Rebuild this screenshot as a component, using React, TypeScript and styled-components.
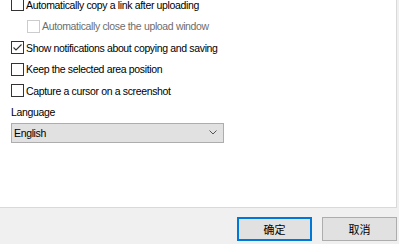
import React from 'react'
import styled, { createGlobalStyle } from 'styled-components'

const Global = createGlobalStyle`
  html, body {
    margin: 0;
    padding: 0;
    background: #f0f0f0;
    overflow: hidden;
  }
  body {
    font-family: Tahoma, "Liberation Sans", "DejaVu Sans", sans-serif;
    font-size: 10.5px;
    letter-spacing: -0.35px;
    color: #000;
  }
`

const Window = styled.div`
  width: 399px;
  height: 244px;
  display: flex;
  flex-direction: column;
  background: #f0f0f0;
`

const Panel = styled.div`
  width: 396px;
  height: 207px;
  background: #fff;
  border-right: 1px solid #d9d9d9;
  border-bottom: 1px solid #d9d9d9;
  overflow: hidden;
`

const Content = styled.div`
  margin-top: -6px;
  padding-left: 11px;
  display: flex;
  flex-direction: column;
`

const Row = styled.label<{ $indent?: boolean }>`
  height: 21.5px;
  display: flex;
  align-items: center;
  gap: 2px;
  padding-left: ${(p) => (p.$indent ? '16px' : '0')};
`

const Box = styled.span<{ $disabled?: boolean }>`
  width: 13px;
  height: 13px;
  box-sizing: border-box;
  border: 1px solid ${(p) => (p.$disabled ? '#cccccc' : '#333333')};
  background: #fff;
  display: flex;
  align-items: center;
  justify-content: center;
  flex-shrink: 0;
`

const Caption = styled.span<{ $disabled?: boolean }>`
  color: ${(p) => (p.$disabled ? '#6d6d6d' : '#000')};
  white-space: nowrap;
`

const Label = styled.div`
  margin-top: 2px;
  height: 16px;
  line-height: 16px;
`

const Select = styled.div`
  margin-top: 3px;
  width: 213px;
  height: 20px;
  box-sizing: border-box;
  border: 1px solid #adadad;
  background: #e1e1e1;
  display: flex;
  align-items: center;
  justify-content: space-between;
  padding: 0 6px 0 2px;
`

const Footer = styled.div`
  flex: 1;
  display: flex;
  justify-content: flex-end;
  align-items: flex-start;
  gap: 10px;
  padding: 9px 2px 0 0;
`

const Button = styled.button<{ $default?: boolean }>`
  width: 75px;
  height: 24px;
  box-sizing: border-box;
  margin: 0;
  padding: 0;
  background: #e1e1e1;
  border: ${(p) => (p.$default ? '2px solid #0078d7' : '1px solid #adadad')};
  font-family: "Noto Sans CJK SC", sans-serif;
  font-size: 11px;
  letter-spacing: 0;
  color: #000;
`

const Check = ({ checked, disabled }: { checked?: boolean; disabled?: boolean }) => (
  <Box $disabled={disabled}>
    {checked && (
      <svg width="11" height="11" viewBox="0 0 11 11">
        <polyline points="1.5,5.5 4,8 9.5,2.5" fill="none" stroke="#333" strokeWidth="1.1" />
      </svg>
    )}
  </Box>
)

const options = [
  { text: 'Automatically copy a link after uploading' },
  { text: 'Automatically close the upload window', indent: true, disabled: true },
  { text: 'Show notifications about copying and saving', checked: true },
  { text: 'Keep the selected area position' },
  { text: 'Capture a cursor on a screenshot' },
]

export default function App() {
  return (
    <Window>
      <Global />
      <Panel>
        <Content>
          {options.map((o) => (
            <Row key={o.text} $indent={o.indent}>
              <Check checked={o.checked} disabled={o.disabled} />
              <Caption $disabled={o.disabled}>{o.text}</Caption>
            </Row>
          ))}
          <Label>Language</Label>
          <Select>
            <span>English</span>
            <svg width="8" height="5" viewBox="0 0 8 5">
              <polyline points="0.5,0.5 4,4 7.5,0.5" fill="none" stroke="#555" strokeWidth="1" />
            </svg>
          </Select>
        </Content>
      </Panel>
      <Footer>
        <Button $default>确定</Button>
        <Button>取消</Button>
      </Footer>
    </Window>
  )
}
